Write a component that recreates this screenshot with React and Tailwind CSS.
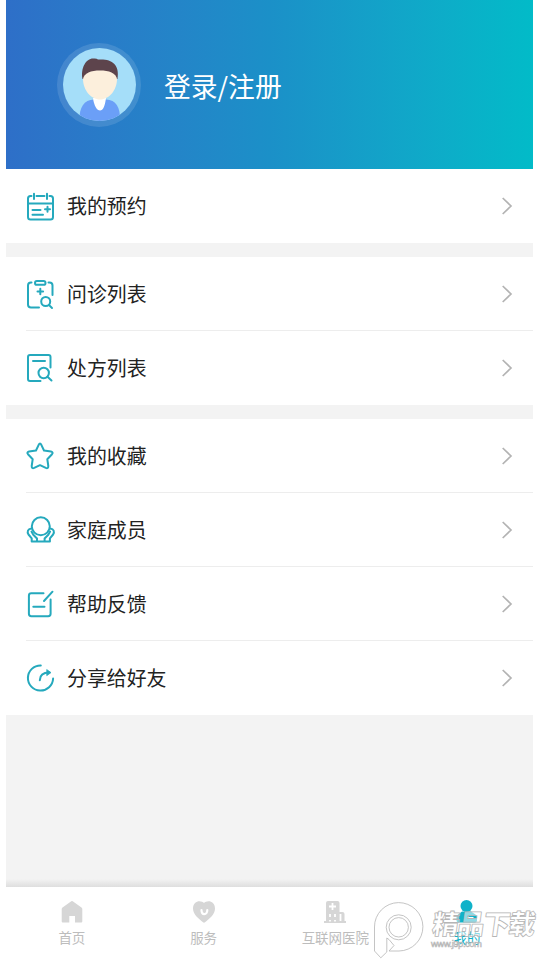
const sections = [
  [{ label: "我的预约", icon: CalendarIcon }],
  [
    { label: "问诊列表", icon: ClipboardIcon },
    { label: "处方列表", icon: PrescriptionIcon },
  ],
  [
    { label: "我的收藏", icon: StarIcon },
    { label: "家庭成员", icon: FamilyIcon },
    { label: "帮助反馈", icon: FeedbackIcon },
    { label: "分享给好友", icon: ShareIcon },
  ],
]

const tabs = [
  { label: "首页", icon: HomeIcon },
  { label: "服务", icon: HeartIcon },
  { label: "互联网医院", icon: HospitalIcon },
  { label: "我的", icon: UserIcon, active: true },
]

function LineIcon({ children }) {
  return (
    <svg
      viewBox="0 0 28 28"
      className="size-7 shrink-0 overflow-visible text-[#25a9bd]"
      fill="none"
      stroke="currentColor"
      strokeWidth="2"
      strokeLinecap="round"
      strokeLinejoin="round"
    >
      {children}
    </svg>
  )
}

function CalendarIcon() {
  return (
    <LineIcon>
      <path d="M5.500 4H4.500Q2 4 2 6.500V25Q2 27.500 4.500 27.500H24.500Q27 27.500 27 25V6.500Q27 4 24.500 4H23.500M10.500 4H18.500M2 11.500H27" />
      <path d="M8 1.800V7M21 1.800V7M6.500 18H14.500M6.500 22.700H17M19 17.300H24M21.500 14.800V19.800" />
    </LineIcon>
  )
}

function ClipboardIcon() {
  return (
    <LineIcon>
      <path d="M5.500 2.500H5Q2 2.500 2 5.500V24.500Q2 27.500 5 27.500H13M22.500 2.500H23.500Q26.500 2.500 26.500 5.500V15" />
      <rect x="9" y="1" width="10.500" height="3.800" rx="1.900" />
      <path d="M11.500 11.500H17.100M14.300 8.700V14.300" />
      <circle cx="19.700" cy="21.500" r="4.500" />
      <path d="M23 25L26 28" />
    </LineIcon>
  )
}

function PrescriptionIcon() {
  return (
    <LineIcon>
      <path d="M14.500 27H4Q2 27 2 25V3Q2 1 4 1H22.500Q24.500 1 24.500 3V13.500M7 7H19" />
      <circle cx="17.700" cy="19" r="5.200" />
      <path d="M21.500 22.800L25.500 26.500" />
    </LineIcon>
  )
}

function StarIcon() {
  return (
    <LineIcon>
      <path d="M12.800 2.600Q14 .5 15.200 2.600L18 8.500L25 9.500Q27.600 10.200 26 12.200L21.300 17.200L22.300 24Q22.300 26.900 19.800 25.900L14 23.200L8.200 25.900Q5.700 26.900 5.700 24L6.700 17.200L2 12.200Q.4 10.200 3 9.500L10 8.500Z" />
    </LineIcon>
  )
}

function FamilyIcon() {
  return (
    <LineIcon>
      <circle cx="14.800" cy="10.300" r="9" />
      <path d="M5.300 12.500C1.800 13 .8 15.500 2.500 18.500L5.700 22.300V25.500H11V22.500L7.300 18.700L5.500 15.500M24.300 12.500C27.800 13 28.800 15.500 27.100 18.500L23.900 22.300V25.500H18.600V22.500L22.300 18.700L24.100 15.500M11 25.500H18.600" />
    </LineIcon>
  )
}

function FeedbackIcon() {
  return (
    <LineIcon>
      <path d="M17.500 3.300H5.300Q2.900 3.300 2.900 5.700V23.800Q2.900 26.200 5.300 26.200H22.200Q24.600 26.200 24.600 23.800V9.500M7.300 16.700H18.500M18 11L26.500 1.700" />
    </LineIcon>
  )
}

function ShareIcon() {
  return (
    <LineIcon>
      <path d="M14.800 1.400A12.600 12.600 0 1 0 27.100 14.500M13.800 16.200C14 11 17 8.600 23 8.600" />
      <path d="M21 5.800L25 8.600L21 11.400Z" fill="currentColor" strokeWidth="0.800" />
    </LineIcon>
  )
}

function TabIcon({ children }) {
  return (
    <svg viewBox="0 0 24 24" className="size-6 overflow-visible" fill="currentColor">
      {children}
    </svg>
  )
}

function HomeIcon() {
  return (
    <TabIcon>
      <path d="M11.300 1.300Q12 .8 12.700 1.300L21.500 7.500Q22.300 8 22.300 9V21.500Q22.300 22.500 21.300 22.500H15V16H9.300V22.500H2.700Q1.700 22.500 1.700 21.500V9Q1.700 8 2.500 7.500Z" />
    </TabIcon>
  )
}

function HeartIcon() {
  return (
    <TabIcon>
      <path d="M12 3.100C9.500-.1 1 .1 1 8.500C1 15 7 18.500 11 22.300Q12 23.100 13 22.300C17 18.500 23 15 23 8.500C23 .1 14.500-.1 12 3.100Z" />
      <path d="M9.500 10C9.500 15.500 15.300 15.500 15.300 10" fill="none" stroke="white" strokeWidth="2.200" strokeLinecap="round" />
    </TabIcon>
  )
}

function HospitalIcon() {
  return (
    <TabIcon>
      <path d="M5 1H14.500Q16.500 1 16.500 3V12H19.500Q21.500 12 21.500 14V21H23V23H1V21H3V3Q3 1 5 1Z" />
      <path d="M6 6.500H13M9.500 3V10M7 14V17M12 14V17M7 20V21.500M12 20V21.500M17.500 14V21" stroke="white" strokeWidth="1.800" />
    </TabIcon>
  )
}

function UserIcon() {
  return (
    <TabIcon>
      <circle cx="11.500" cy="6" r="6" />
      <path d="M7 11.500H16L20.500 14.500Q22 15.500 22 17.500V20.500Q22 22.500 20 22.500H3.500Q1.500 22.500 1.500 20.500V17.500Q1.500 15.500 3 14.500Z" />
      <path d="M12.500 17.700H18.500" stroke="white" strokeWidth="1.500" />
    </TabIcon>
  )
}

function Avatar() {
  return (
    <div className="size-[84px] shrink-0 rounded-full bg-white/12 p-[5.500px]">
      <svg viewBox="0 0 73 73" className="size-full">
        <defs>
          <clipPath id="avatar">
            <circle cx="36.500" cy="36.500" r="36.500" />
          </clipPath>
        </defs>
        <g clipPath="url(#avatar)">
          <rect width="73" height="73" fill="#a5def9" />
          <path d="M16.500 73C16 59 21 52 31 51.500H43C53 52 57.500 59 57 73Z" fill="#6b9ff7" />
          <path d="M30 50C31 58 34 62.500 37 62.500S42 58 43 50Z" fill="white" />
          <path d="M19.500 31C17.500 20 23 10.500 30 10.500Q33.500 10 35 11.500C48 10.500 57 15.500 54.500 31Z" fill="#5d444c" />
          <path d="M20 31C21 25 28 22.500 37 22.500S53 25 54 31C54 42 46 51.500 37 51.500S20 42 20 31Z" fill="#fcefdc" />
        </g>
      </svg>
    </div>
  )
}

function MenuRow({ item, last }) {
  const Icon = item.icon
  return (
    <div className="flex h-[74px] pl-5">
      <div className={`flex flex-1 items-center pr-5 ${last ? "" : "border-b border-[#ededed]"}`}>
        <Icon />
        <span className="ml-[13px] flex-1 text-[19.900px] leading-7 text-[#222]">{item.label}</span>
        <svg viewBox="0 0 10 18" className="mr-px h-[18px] w-2.5 overflow-visible" fill="none" stroke="#b3b3b3" strokeWidth="1.700">
          <path d="M.7 1L9 9L.7 17" />
        </svg>
      </div>
    </div>
  )
}

function Watermark() {
  return (
    <div className="pointer-events-none absolute top-[900px] left-[372px] flex h-[60px] w-[166px]">
      <svg viewBox="0 0 166 60" className="size-full overflow-visible" fill="white" fillOpacity="0.550" stroke="#b5b5b5" strokeWidth="0.800">
        <path d="M2.500 51V27A24.200 24.200 0 1 1 27 51H17L22 45.500L17 39.500L14.800 38V52L8.800 57.800Z" />
        <circle cx="26.700" cy="27.300" r="12.500" />
        <circle cx="26.700" cy="27.300" r="9.700" />
        <text
          x="64"
          y="34"
          fontSize="27"
          fontWeight="900"
          textLength="103"
          transform="skewX(-8)"
          strokeWidth="0.800"
          strokeLinejoin="round"
        >
          精品下载
        </text>
        <text x="59" y="46.500" fontSize="9.500" textLength="51" fontFamily="Liberation Sans, sans-serif" strokeWidth="0.600">
          www.j9p.com
        </text>
      </svg>
    </div>
  )
}

export default function App() {
  return (
    <div className="relative h-[960px] w-[540px] overflow-hidden bg-white pr-[7px] pl-1.5 font-['Noto_Sans_CJK_SC',sans-serif]">
      <div className="flex h-full flex-col bg-[#f3f3f3]">
        <header className="flex h-[169px] shrink-0 items-center bg-linear-to-r from-[#2e6fc8] via-[#1b90c8] to-[#02bbc8] pl-[51px]">
          <Avatar />
          <span className="ml-[23px] pt-0.5 text-[26.800px] leading-10 text-white">登录/注册</span>
        </header>

        <main className="flex flex-1 flex-col gap-3.5">
          {sections.map((items, i) => (
            <section key={i} className="bg-white">
              {items.map((item, j) => (
                <MenuRow key={item.label} item={item} last={j === items.length - 1} />
              ))}
            </section>
          ))}
        </main>

        <div className="h-2 bg-linear-to-b from-[#f3f3f3] to-[#dedede]" />
        <nav className="grid h-[73px] shrink-0 grid-cols-4 bg-white">
          {tabs.map(({ label, icon: Icon, active }) => (
            <div
              key={label}
              className={`flex flex-col items-center pt-[13px] ${active ? "text-[#10b2c9]" : "text-[#d6d6d6]"}`}
            >
              <Icon />
              <span className={`mt-[3px] text-[13.500px] leading-5 ${active ? "" : "text-[#bdbdbd]"}`}>{label}</span>
            </div>
          ))}
        </nav>
      </div>
      <Watermark />
    </div>
  )
}
